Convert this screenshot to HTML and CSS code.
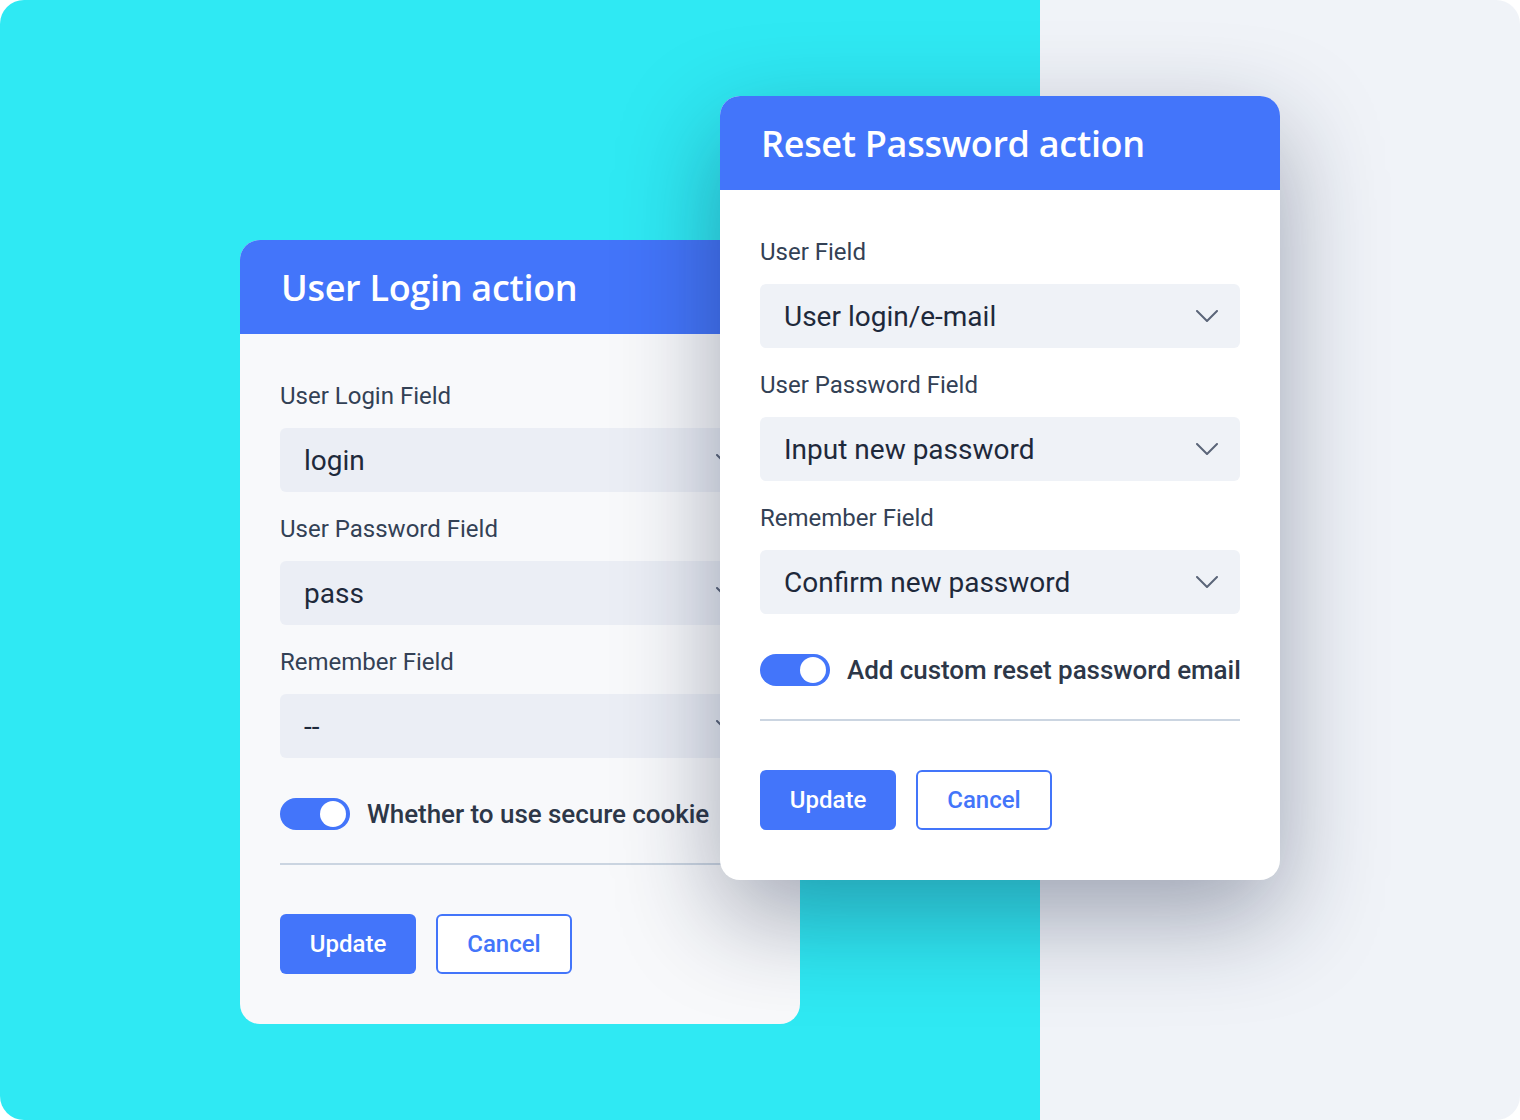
FILE: index.html
```html
<!DOCTYPE html>
<html lang="en">
<head>
  <meta charset="UTF-8" />
  <meta name="viewport" content="width=device-width, initial-scale=1.0" />
  <title>Login &amp; Reset Password actions</title>
  <link rel="stylesheet" href="styles.css">
</head>
<body>
  <div class="stage">

    <div class="card card-login">
      <div class="card-header">
        <h2>User Login action</h2>
      </div>
      <div class="card-body">
        <label class="field-label">User Login Field</label>
        <div class="select">
          <span>login</span>
          <svg class="chevron" width="22" height="12" viewBox="0 0 22 12"><path d="M1 1l10 10L21 1" /></svg>
        </div>

        <label class="field-label">User Password Field</label>
        <div class="select">
          <span>pass</span>
          <svg class="chevron" width="22" height="12" viewBox="0 0 22 12"><path d="M1 1l10 10L21 1" /></svg>
        </div>

        <label class="field-label">Remember Field</label>
        <div class="select">
          <span>--</span>
          <svg class="chevron" width="22" height="12" viewBox="0 0 22 12"><path d="M1 1l10 10L21 1" /></svg>
        </div>

        <div class="toggle-row">
          <span class="toggle"><span class="knob"></span></span>
          <span class="toggle-text">Whether to use secure cookie</span>
        </div>

        <hr class="divider" />

        <div class="actions">
          <button class="btn btn-primary">Update</button>
          <button class="btn btn-outline">Cancel</button>
        </div>
      </div>
    </div>

    <div class="card card-reset">
      <div class="card-header">
        <h2>Reset Password action</h2>
      </div>
      <div class="card-body">
        <label class="field-label">User Field</label>
        <div class="select">
          <span>User login/e-mail</span>
          <svg class="chevron" width="22" height="12" viewBox="0 0 22 12"><path d="M1 1l10 10L21 1" /></svg>
        </div>

        <label class="field-label">User Password Field</label>
        <div class="select">
          <span>Input new password</span>
          <svg class="chevron" width="22" height="12" viewBox="0 0 22 12"><path d="M1 1l10 10L21 1" /></svg>
        </div>

        <label class="field-label">Remember Field</label>
        <div class="select">
          <span>Confirm new password</span>
          <svg class="chevron" width="22" height="12" viewBox="0 0 22 12"><path d="M1 1l10 10L21 1" /></svg>
        </div>

        <div class="toggle-row">
          <span class="toggle"><span class="knob"></span></span>
          <span class="toggle-text">Add custom reset password email</span>
        </div>

        <hr class="divider" />

        <div class="actions">
          <button class="btn btn-primary">Update</button>
          <button class="btn btn-outline">Cancel</button>
        </div>
      </div>
    </div>

  </div>
</body>
</html>
```

FILE: styles.css
```css
body {
  margin: 0;
  background: #ffffff;
  font-family: Roboto, "Liberation Sans", sans-serif;
  color: #2d3748;
}

.stage {
  position: relative;
  width: 1520px;
  height: 1120px;
  border-radius: 24px;
  overflow: hidden;
  background: linear-gradient(to right, #2fe9f3 0, #2fe9f3 1040px, #f0f3f8 1040px);
}

/* cards sit like windows on the canvas */
.card {
  position: absolute;
  width: 560px;
  border-radius: 20px;
  overflow: hidden;
  background: #ffffff;
}

.card-login {
  left: 240px;
  top: 240px;
  background: #f8f9fb;
}

.card-reset {
  left: 720px;
  top: 96px;
  box-shadow: 0 36px 100px rgba(22, 32, 64, 0.38);
}

.card-header {
  height: 94px;
  display: flex;
  align-items: center;
  padding: 0 41px;
  background: #4375fa;
}

.card-header h2 {
  margin: 0;
  font-family: "Open Sans", "Noto Sans", sans-serif;
  font-weight: 600;
  font-size: 36px;
  letter-spacing: -0.3px;
  color: #ffffff;
}

.card-body {
  display: flex;
  flex-direction: column;
  padding: 48px 40px 50px;
}

.field-label {
  display: block;
  height: 28px;
  line-height: 28px;
  font-size: 24px;
  color: #334155;
  margin-bottom: 18px;
}

.select {
  display: flex;
  align-items: center;
  justify-content: space-between;
  height: 64px;
  padding: 0 22px 0 24px;
  border-radius: 6px;
  background: #eff2f7;
  font-size: 28px;
  color: #1e293b;
  margin-bottom: 23px;
}

.card-login .select {
  background: #ebeef5;
}

.chevron path {
  fill: none;
  stroke: #5b6579;
  stroke-width: 2;
  stroke-linecap: round;
  stroke-linejoin: round;
}

.toggle-row {
  display: flex;
  align-items: center;
  gap: 17px;
  margin-top: 17px;
}

.toggle {
  position: relative;
  width: 70px;
  height: 32px;
  border-radius: 16px;
  background: #4375fa;
  flex-shrink: 0;
}

.toggle .knob {
  position: absolute;
  right: 4px;
  top: 3px;
  width: 26px;
  height: 26px;
  border-radius: 50%;
  background: #ffffff;
}

.toggle-text {
  font-size: 26px;
  font-weight: 500;
  letter-spacing: -0.05px;
  color: #2d3748;
  white-space: nowrap;
}

.divider {
  width: 100%;
  margin: 33px 0 49px;
  border: 0;
  height: 2px;
  background: #cbd5e1;
}

.actions {
  display: flex;
  gap: 20px;
}

.btn {
  width: 136px;
  height: 60px;
  border-radius: 6px;
  font-family: Roboto, "Liberation Sans", sans-serif;
  font-size: 24px;
  font-weight: 500;
  cursor: pointer;
}

.btn-primary {
  border: none;
  background: #4375fa;
  color: #ffffff;
}

.btn-outline {
  border: 2px solid #4375fa;
  background: #ffffff;
  color: #4375fa;
}
```
